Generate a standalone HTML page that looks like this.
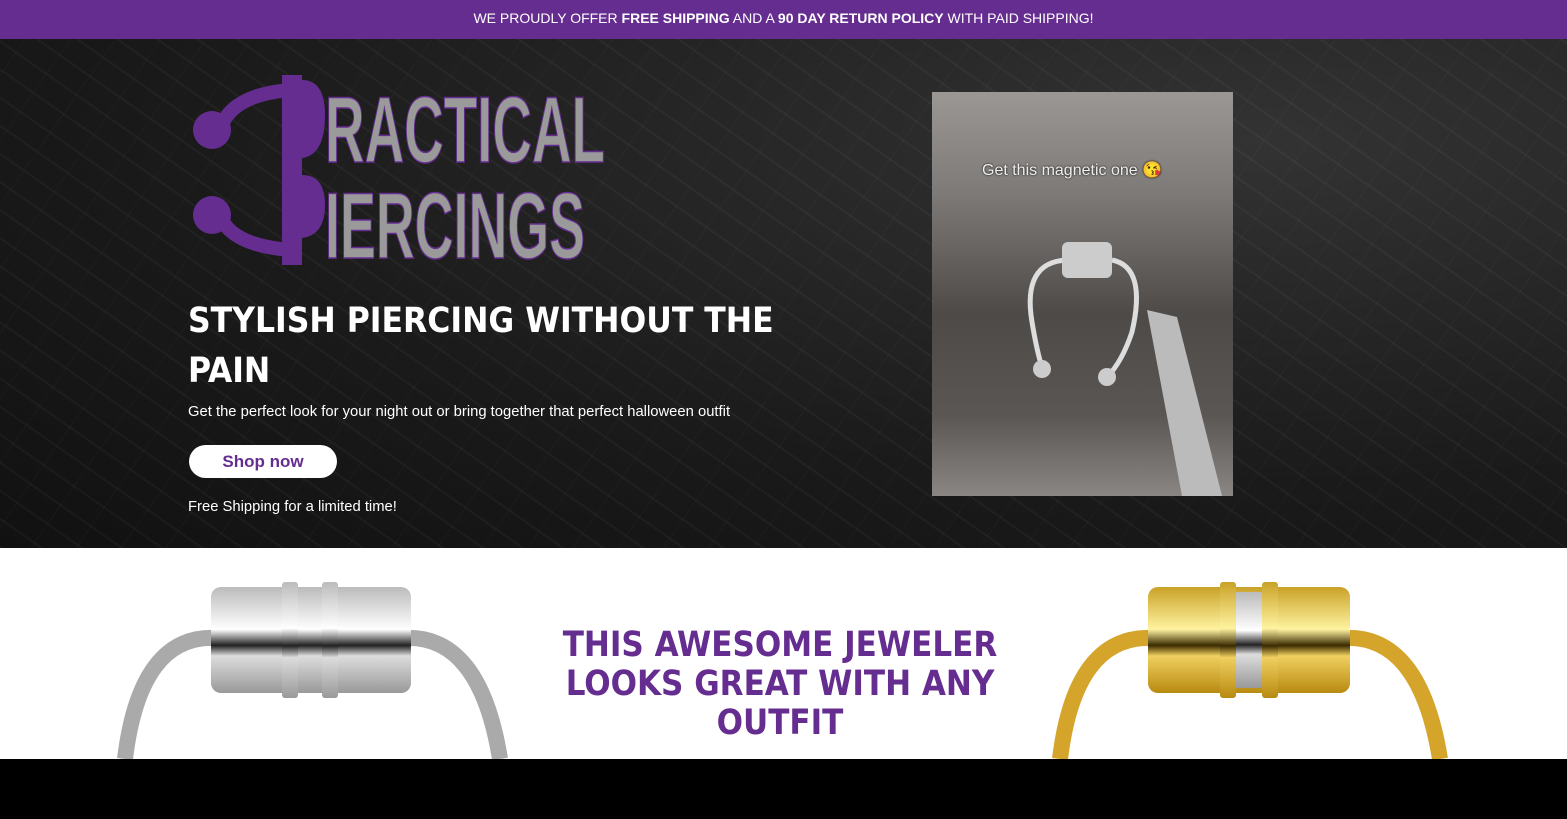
<!DOCTYPE html>
<html><head><meta charset="utf-8"><style>
*{margin:0;padding:0;box-sizing:border-box}
body{width:1567px;height:819px;overflow:hidden;background:#fff;font-family:"Liberation Sans",sans-serif;position:relative}
.top{position:absolute;left:0;top:0;width:1567px;height:39px;background:#662d91;color:#fff;font-size:14px;text-align:center;line-height:37px}
.hero{position:absolute;left:0;top:39px;width:1567px;height:509px;background:
repeating-linear-gradient(35deg,rgba(255,255,255,0.035) 0 2px,transparent 2px 23px),
repeating-linear-gradient(-55deg,rgba(255,255,255,0.025) 0 1px,transparent 1px 37px),
radial-gradient(ellipse at 80% 20%,#333,#1a1a1a 60%,#111)}
.h1{position:absolute;left:188px;top:296px;color:#fff;font:bold 35px/50px "DejaVu Sans Condensed","DejaVu Sans",sans-serif;white-space:nowrap}
.sub{position:absolute;left:188px;top:404px;color:#fff;font-size:14.8px}
.btn{position:absolute;left:189px;top:445px;width:148px;height:33px;border-radius:17px;background:#fff;color:#662d91;font-weight:bold;font-size:17px;text-align:center;line-height:33px}
.free{position:absolute;left:188px;top:499px;color:#fff;font-size:14.8px}
.photo{position:absolute;left:932px;top:92px;width:301px;height:404px;background:linear-gradient(180deg,#9a9794 0%,#7d7a78 25%,#4e4a48 55%,#5a5654 80%,#8a8684 100%)}
.photo span{position:absolute;left:50px;top:68px;color:#eee;font-size:16px;text-shadow:0 0 2px #000}
.t2{position:absolute;left:530px;top:626px;width:500px;text-align:center;color:#662d91;font:bold 34.5px/39px "DejaVu Sans Condensed","DejaVu Sans",sans-serif;white-space:nowrap}
.bot{position:absolute;left:0;top:759px;width:1567px;height:60px;background:#000}
</style></head><body>
<div class="top">WE PROUDLY OFFER <b>FREE SHIPPING</b> AND A <b>90 DAY RETURN POLICY</b> WITH PAID SHIPPING!</div>
<div class="hero"></div>
<svg style="position:absolute;left:190px;top:70px" width="420" height="200">
<path d="M100 20 Q40 25 30 60" stroke="#662d91" stroke-width="14" fill="none"/>
<path d="M100 180 Q40 175 30 145" stroke="#662d91" stroke-width="14" fill="none"/>
<circle cx="22" cy="60" r="19" fill="#662d91"/><circle cx="22" cy="145" r="19" fill="#662d91"/>
<rect x="92" y="5" width="20" height="190" fill="#662d91"/>
<path d="M112 10 Q135 10 135 45 Q135 85 112 88 Z" fill="#662d91"/>
<path d="M112 105 Q135 105 135 135 Q135 165 112 168 Z" fill="#662d91"/>
<text x="135" y="92" font-family="Liberation Sans Narrow,Liberation Sans,sans-serif" font-weight="bold" font-size="94" fill="#9a9a9a" stroke="#662d91" stroke-width="1.5" textLength="280" lengthAdjust="spacingAndGlyphs">RACTICAL</text>
<text x="135" y="188" font-family="Liberation Sans Narrow,Liberation Sans,sans-serif" font-weight="bold" font-size="94" fill="#9a9a9a" stroke="#662d91" stroke-width="1.5" textLength="260" lengthAdjust="spacingAndGlyphs">IERCINGS</text>
</svg>
<div class="h1">STYLISH PIERCING WITHOUT THE<br>PAIN</div>
<div class="sub">Get the perfect look for your night out or bring together that perfect halloween outfit</div>
<div class="btn">Shop now</div>
<div class="free">Free Shipping for a limited time!</div>
<div class="photo"><span>Get this magnetic one 😘</span>
<svg width="301" height="404" style="position:absolute;left:0;top:0">
<path d="M135 168 Q90 170 100 230 Q105 260 110 275" stroke="#ddd" stroke-width="5" fill="none"/>
<path d="M180 168 Q215 175 200 240 Q190 270 175 285" stroke="#ddd" stroke-width="5" fill="none"/>
<rect x="130" y="150" width="50" height="36" rx="6" fill="#ccc"/>
<circle cx="110" cy="277" r="9" fill="#ccc"/><circle cx="175" cy="285" r="9" fill="#ccc"/>
<path d="M215 218 L245 225 L290 404 L250 404 Z" fill="#bbb"/>
</svg></div>
<svg style="position:absolute;left:0;top:560px" width="1567" height="200">
<defs><linearGradient id="s" x1="0" y1="0" x2="0" y2="1"><stop offset="0" stop-color="#bbb"/><stop offset="0.4" stop-color="#fff"/><stop offset="0.55" stop-color="#222"/><stop offset="0.65" stop-color="#ddd"/><stop offset="1" stop-color="#999"/></linearGradient>
<linearGradient id="g" x1="0" y1="0" x2="0" y2="1"><stop offset="0" stop-color="#c9a227"/><stop offset="0.4" stop-color="#fff3a0"/><stop offset="0.55" stop-color="#3a2a00"/><stop offset="0.65" stop-color="#f0d060"/><stop offset="1" stop-color="#b88a10"/></linearGradient></defs>
<path d="M215 78 Q140 75 125 199" stroke="#aaa" stroke-width="16" fill="none"/>
<path d="M405 78 Q480 75 500 199" stroke="#aaa" stroke-width="16" fill="none"/>
<rect x="211" y="27" width="200" height="106" rx="10" fill="url(#s)"/>
<rect x="282" y="22" width="16" height="116" rx="3" fill="url(#s)"/><rect x="322" y="22" width="16" height="116" rx="3" fill="url(#s)"/>
<path d="M1152 78 Q1075 75 1060 199" stroke="#d4a52a" stroke-width="16" fill="none"/>
<path d="M1345 78 Q1420 75 1440 199" stroke="#d4a52a" stroke-width="16" fill="none"/>
<rect x="1148" y="27" width="202" height="106" rx="10" fill="url(#g)"/>
<rect x="1236" y="32" width="26" height="96" fill="url(#s)"/>
<rect x="1220" y="22" width="16" height="116" rx="3" fill="url(#g)"/><rect x="1262" y="22" width="16" height="116" rx="3" fill="url(#g)"/>
</svg>
<div class="t2">THIS AWESOME JEWELER<br>LOOKS GREAT WITH ANY<br>OUTFIT</div>
<div class="bot"></div>
</body></html>
